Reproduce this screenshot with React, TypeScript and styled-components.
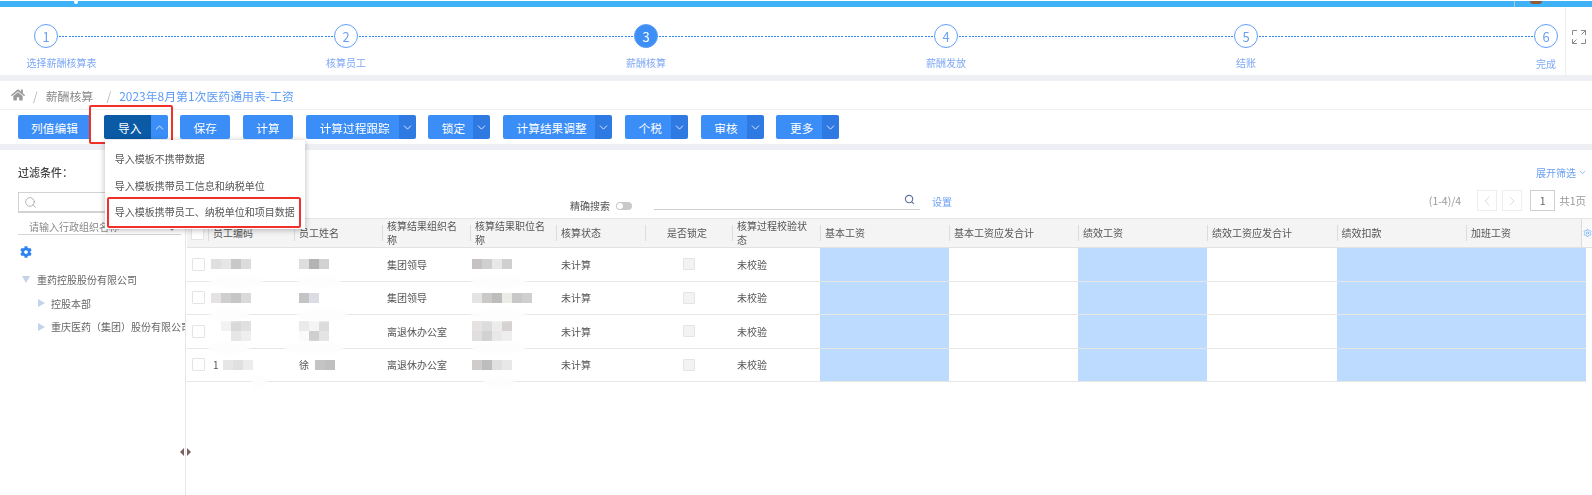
import { Fragment } from "react";
import styled, { createGlobalStyle } from "styled-components";
import { ChevronDown, ChevronLeft, ChevronRight, ChevronUp, Search, Settings } from "lucide-react";
import { FaCog, FaHome } from "react-icons/fa";

const GlobalStyle = createGlobalStyle`
  html, body {
    margin: 0;
    height: 495px;
    overflow: hidden;
    background: #fff;
  }
  body {
    font-family: "Noto Sans CJK SC", "Noto Sans", sans-serif;
    font-size: 10px;
    color: #555;
  }
  * { box-sizing: border-box; }
`;

const Page = styled.div`
  display: flex;
  flex-direction: column;
  height: 495px;
  filter: blur(0.4px);
`;

const TopBar = styled.div`
  display: flex;
  flex: none;
  height: 6px;
  margin-top: 1px;
  padding-left: 74px;
  background: #3fb1f7;
`;
const TopDot = styled.i`
  width: 4px;
  height: 4px;
  margin-top: -1px;
  border-radius: 50%;
  background: #fff;
`;
const TopDivider = styled.i`
  width: 1px;
  margin-left: auto;
  background: #b4c4cf;
`;
const TopAvatar = styled.i`
  width: 12px;
  height: 3px;
  margin: 0 50px 0 15px;
  border-radius: 0 0 6px 6px;
  background: #8d5a3c;
`;

const StepperBar = styled.div`
  display: flex;
  flex: none;
  height: 68px;
`;
const StepTrack = styled.div`
  display: flex;
  flex: 1;
  align-items: flex-start;
  padding: 17px 7px 0 34px;
`;
const Step = styled.div`
  display: flex;
  flex-direction: column;
  align-items: center;
  width: 24px;
`;
const StepCircle = styled.div<{ $active?: boolean }>`
  display: flex;
  flex: none;
  align-items: center;
  justify-content: center;
  width: 24px;
  height: 24px;
  border: 1px solid #5f9df7;
  border-radius: 50%;
  background: ${(p) => (p.$active ? "#3d8ff6" : "#fff")};
  color: ${(p) => (p.$active ? "#fff" : "#6ba0f6")};
  font-size: 13px;
`;
const StepLabel = styled.div<{ $shift?: number; $drop?: number }>`
  margin-top: ${(p) => 8 + (p.$drop ?? 0)}px;
  margin-left: ${(p) => p.$shift ?? 0}px;
  color: #7fa8f5;
  font-size: 10px;
  line-height: 14px;
  white-space: nowrap;
`;
const StepLine = styled.div`
  flex: 1;
  height: 1px;
  margin: 12px 1px 0;
  background: repeating-linear-gradient(90deg, #2f86f5 0 2px, transparent 2px 3.2px);
`;
const ExpandCell = styled.div`
  display: flex;
  flex: none;
  align-items: flex-start;
  justify-content: center;
  width: 27px;
  padding-top: 23px;
  border-left: 1px solid #eeeeee;
`;

const Band = styled.div`
  flex: none;
  height: 6px;
  background: #eeeff4;
`;

const Breadcrumb = styled.div`
  display: flex;
  flex: none;
  align-items: center;
  height: 29px;
  padding-left: 11px;
  border-bottom: 1px solid #f1f1f1;
  color: #888;
  font-size: 11.9px;
`;
const Slash = styled.span`
  margin: 0 8px 0 8px;
  color: #b5b5b5;
`;
const CrumbCurrent = styled.span`
  color: #5e9bf5;
`;

const Toolbar = styled.div`
  position: relative;
  z-index: 5;
  display: flex;
  flex: none;
  gap: 12.7px;
  height: 34px;
  padding: 5px 0 0 18px;
`;
const ButtonGroup = styled.div<{ $width: number }>`
  position: relative;
  display: flex;
  flex: none;
  width: ${(p) => p.$width}px;
  height: 24px;
`;
const ButtonMain = styled.button<{ $dark?: boolean }>`
  flex: 1;
  padding: 0 0 0 5px;
  border: 0;
  border-radius: 2px 0 0 2px;
  background: ${(p) => (p.$dark ? "#0a5aa6" : "#3b8df7")};
  color: #fff;
  font-family: inherit;
  font-size: 11.7px;
  &:only-child {
    padding: 0;
    border-radius: 2px;
  }
`;
const ButtonArrow = styled.button<{ $open?: boolean }>`
  display: flex;
  flex: none;
  align-items: center;
  justify-content: center;
  width: 17px;
  padding: 0;
  border: 0;
  border-radius: 0 2px 2px 0;
  background: ${(p) => (p.$open ? "#3b8df7" : "#2f7ae2")};
  color: #fff;
`;
const RedFrame = styled.div`
  position: absolute;
  inset: -10px -5px -5px -15px;
  border: 2px solid #f2302a;
  border-radius: 2px;
  pointer-events: none;
`;
const Menu = styled.div`
  position: absolute;
  top: 25px;
  left: 1px;
  width: 200px;
  height: 89px;
  padding-top: 6px;
  background: #fff;
  box-shadow: 0 1px 6px rgba(0, 0, 0, 0.28);
`;
const MenuItem = styled.div<{ $marked?: boolean }>`
  position: relative;
  height: 26.5px;
  padding-left: 10px;
  color: #555;
  font-size: 10px;
  line-height: 26.5px;
  white-space: nowrap;
  ${(p) =>
    p.$marked &&
    `&::after {
      content: "";
      position: absolute;
      inset: -2px 4px -2px 2px;
      border: 2px solid #f2302a;
      border-radius: 2px;
    }`}
`;

const Main = styled.div`
  display: flex;
  flex: 1;
  min-height: 0;
`;

const Sidebar = styled.aside`
  position: relative;
  flex: none;
  width: 186px;
  padding: 14px 1px 0 18px;
`;
const SidebarRule = styled.i`
  position: absolute;
  top: 68px;
  right: 0;
  bottom: 0;
  width: 1px;
  background: #e6e6e6;
`;
const Handle = styled.div`
  position: absolute;
  top: 298px;
  right: -5px;
  display: flex;
  gap: 3px;
  align-items: center;
`;
const HandleArrow = styled.i<{ $left?: boolean }>`
  width: 0;
  height: 0;
  border-top: 4px solid transparent;
  border-bottom: 4px solid transparent;
  ${(p) => (p.$left ? "border-right: 4px solid #7d6060;" : "border-left: 4px solid #7d6060;")}
`;
const FilterTitle = styled.div`
  color: #444;
  font-size: 11px;
  font-weight: 500;
  line-height: 16px;
`;
const SearchBox = styled.div`
  display: flex;
  align-items: center;
  height: 21px;
  margin: 12px 4px 0 0;
  padding-left: 5px;
  border: 1px solid #d2d2d2;
  border-bottom-width: 2px;
  border-right: 0;
  color: #999;
`;
const OrgSelect = styled.div`
  display: flex;
  align-items: center;
  justify-content: space-between;
  height: 22px;
  margin-right: 4px;
  padding: 6px 6px 0 11px;
  border-bottom: 1px solid #d5d5d5;
  color: #888;
  font-size: 10px;
`;
const Caret = styled.i`
  width: 0;
  height: 0;
  margin-top: 6px;
  border-top: 3px solid #999;
  border-right: 3px solid transparent;
  border-left: 3px solid transparent;
`;
const TreeGear = styled.div`
  display: flex;
  height: 12px;
  margin: 11px 0 10px 2px;
  color: #2f83ee;
`;
const TreeRow = styled.div<{ $depth: number }>`
  display: flex;
  align-items: center;
  gap: ${(p) => (p.$depth === 0 ? 7 : 6)}px;
  height: 23.5px;
  padding-left: ${(p) => (p.$depth === 0 ? 4 : 20)}px;
  overflow: hidden;
  color: #666;
  font-size: 10px;
  white-space: nowrap;
`;
const TreeArrow = styled.i<{ $open?: boolean }>`
  flex: none;
  width: 0;
  height: 0;
  ${(p) =>
    p.$open
      ? "border-top: 7px solid #c3d3ea; border-left: 4.5px solid transparent; border-right: 4.5px solid transparent;"
      : "border-left: 7px solid #c3d3ea; border-top: 4.5px solid transparent; border-bottom: 4.5px solid transparent;"}
`;

const Content = styled.section`
  flex: 1;
  min-width: 0;
  padding: 14px 0 0 1px;
`;
const FilterLinkRow = styled.div`
  display: flex;
  justify-content: flex-end;
  align-items: center;
  gap: 2px;
  height: 16px;
  padding-right: 5px;
  color: #6a9ff5;
  font-size: 10px;
`;
const SearchRow = styled.div`
  display: flex;
  align-items: flex-start;
  height: 28px;
  margin-top: 10px;
  padding-left: 383px;
`;
const ExactLabel = styled.span`
  margin-top: 9px;
  line-height: 14px;
`;
const Toggle = styled.i`
  position: relative;
  width: 16px;
  height: 8px;
  margin: 12px 0 0 6px;
  border-radius: 4px;
  background: #c9c9c9;
  &::after {
    content: "";
    position: absolute;
    top: 1px;
    left: 1px;
    width: 6px;
    height: 6px;
    border-radius: 50%;
    background: #fff;
  }
`;
const KeywordField = styled.div`
  display: flex;
  justify-content: flex-end;
  width: 266px;
  height: 20px;
  margin-left: 22px;
  padding: 4px 5px 0 0;
  border-bottom: 1px solid #cfcfcf;
  color: #5b6f9a;
`;
const SetLink = styled.a`
  margin: 5px 0 0 12px;
  color: #6a9ff5;
  line-height: 14px;
`;
const Pager = styled.div`
  display: flex;
  align-items: center;
  height: 21px;
  margin-left: auto;
  padding-right: 6px;
  color: #999;
  font-size: 10.5px;
`;
const PagerCount = styled.span`
  margin-right: 16px;
`;
const PagerButton = styled.div`
  display: flex;
  align-items: center;
  justify-content: center;
  width: 20px;
  height: 21px;
  margin-right: 5px;
  border: 1px solid #eee;
  color: #ccc;
`;
const PagerInput = styled.div`
  display: flex;
  align-items: center;
  justify-content: center;
  width: 25px;
  height: 21px;
  margin: 0 4px 0 3px;
  border: 1px solid #d0d0d0;
  color: #666;
`;

const TableWrap = styled.div`
  position: relative;
  width: 1405px;
`;
const HeadRow = styled.div`
  display: grid;
  grid-template-columns: 21px 86px 88px 88px 86px 89px 87px 88px 129px 129px 129px 129.5px 129.5px 115px 11px;
  height: 30px;
  border-top: 1px solid #e6e6e6;
  border-bottom: 1px solid #e2e2e2;
`;
const HeadCell = styled.div<{ $center?: boolean }>`
  position: relative;
  display: flex;
  align-items: center;
  justify-content: ${(p) => (p.$center ? "center" : "flex-start")};
  padding: 0 8px 0 5px;
  background: #f4f4f4;
  color: #555;
  line-height: 14px;
  &::before {
    content: "";
    position: absolute;
    top: 6px;
    bottom: 6px;
    left: 0;
    width: 1px;
    background: #dcdcdc;
  }
`;
const CheckHead = styled.div`
  display: flex;
  align-items: center;
  padding-left: 4px;
  background: #f4f4f4;
`;
const GearCell = styled.div`
  display: flex;
  align-items: center;
  padding-left: 1px;
  overflow: hidden;
  border-left: 1px solid #dcdcdc;
  background: #f9f9f9;
  color: #6fadf3;
`;
const BodyRow = styled.div`
  display: grid;
  grid-template-columns: 21px 86px 88px 88px 86px 89px 87px 88px 129px 129px 129px 129.5px 129.5px 120px;
  width: 1399px;
  height: 33.5px;
  border-bottom: 1px solid #e6e6e6;
`;
const Cell = styled.div<{ $fill?: boolean; $center?: boolean }>`
  display: flex;
  align-items: center;
  justify-content: ${(p) => (p.$center ? "center" : "flex-start")};
  padding-left: ${(p) => (p.$center ? 0 : 5)}px;
  background: ${(p) => (p.$fill ? "#bddaff" : "transparent")};
  color: #555;
  white-space: nowrap;
`;
const CheckCell = styled.div`
  display: flex;
  align-items: center;
  padding-left: 5px;
`;
const Check = styled.i<{ $off?: boolean }>`
  display: block;
  flex: none;
  width: ${(p) => (p.$off ? 12 : 13)}px;
  height: ${(p) => (p.$off ? 12 : 13)}px;
  border: 1px solid #e4e4e4;
  border-radius: 1px;
  background: ${(p) => (p.$off ? "#f3f3f3" : "#fff")};
`;
const Mosaic = styled.div<{ $cols: number; $indent: number }>`
  display: grid;
  flex: none;
  grid-template-columns: repeat(${(p) => p.$cols}, 10px);
  grid-auto-rows: 10px;
  margin-left: ${(p) => p.$indent}px;
`;
const Tile = styled.i<{ $tone: string }>`
  background: ${(p) => p.$tone};
`;
const SmudgeLayer = styled.svg`
  position: absolute;
  top: 30px;
  left: 0;
  width: 400px;
  height: 175px;
  filter: blur(1.5px);
  pointer-events: none;
`;

const steps = [
  { n: 1, label: "选择薪酬核算表", shift: 31 },
  { n: 2, label: "核算员工" },
  { n: 3, label: "薪酬核算", active: true },
  { n: 4, label: "薪酬发放" },
  { n: 5, label: "结账" },
  { n: 6, label: "完成", drop: 1 },
];

const actions = [
  { label: "列值编辑", width: 73 },
  { label: "保存", width: 50 },
  { label: "计算", width: 50 },
  { label: "计算过程跟踪", width: 110, arrow: true },
  { label: "锁定", width: 62, arrow: true },
  { label: "计算结果调整", width: 109, arrow: true },
  { label: "个税", width: 63, arrow: true },
  { label: "审核", width: 63, arrow: true },
  { label: "更多", width: 63, arrow: true },
];

const columns = [
  "员工编码",
  "员工姓名",
  "核算结果组织名称",
  "核算结果职位名称",
  "核算状态",
  "是否锁定",
  "核算过程校验状态",
  "基本工资",
  "基本工资应发合计",
  "绩效工资",
  "绩效工资应发合计",
  "绩效扣款",
  "加班工资",
];

type Patch = { cols: number; tones: string[]; lead?: string; indent?: number };

const rows: { code: Patch; name: Patch; org: string; post: Patch }[] = [
  {
    code: { cols: 4, indent: -2, tones: ["#e0dede", "#e6e6e6", "#c9c8c8", "#dcdcdc"] },
    name: { cols: 3, indent: 0, tones: ["#dedede", "#b4b4b4", "#d2d2d2"] },
    org: "集团领导",
    post: { cols: 4, indent: -3, tones: ["#c6c2c2", "#cfcfcf", "#e8e8e8", "#cfcfcf"] },
  },
  {
    code: { cols: 4, indent: -2, tones: ["#e4e2e2", "#d0cfcf", "#c6c6c6", "#dadada"] },
    name: { cols: 2, indent: 0, tones: ["#c4c4c4", "#dcdce4"] },
    org: "集团领导",
    post: { cols: 6, indent: -3, tones: ["#e4e4e4", "#cbc8c8", "#bdbdbd", "#ecece6", "#c8c8c8", "#cfcfcf"] },
  },
  {
    code: { cols: 4, indent: -2, tones: ["#fff", "#f2f2f2", "#d9d9d9", "#e0e0e0", "#fff", "#fff", "#e6e6e6", "#eeeeee"] },
    name: { cols: 3, indent: 0, tones: ["#eaeaea", "#f4f4f4", "#dcdcdc", "#fafafa", "#cfcfcf", "#e4e4e4"] },
    org: "离退休办公室",
    post: { cols: 4, indent: -3, tones: ["#e6e2e2", "#dcdcdc", "#ececec", "#d6d2d2", "#e0dede", "#d2d2d2", "#e8e8e8", "#eeeeee"] },
  },
  {
    code: { cols: 3, lead: "1", indent: 4, tones: ["#e6e6e6", "#e0e0e0", "#ececec"] },
    name: { cols: 2, lead: "徐", indent: 6, tones: ["#c4c4c4", "#c0c0c0"] },
    org: "离退休办公室",
    post: { cols: 4, indent: -3, tones: ["#d0cccc", "#bdbdbd", "#e0e0e0", "#e8e8e8"] },
  },
];

// white smudges left over the row rules by the redaction
const smudges = [
  [49, 34, 27], [42, 67, 20], [42, 100, 21], [72, 134, 8],
  [132, 34, 22], [135, 67, 26], [127, 100, 30],
  [312, 34, 28], [312, 67, 28], [312, 100, 27], [312, 134, 16],
];

function Patchwork({ patch }: { patch: Patch }) {
  return (
    <>
      {patch.lead}
      <Mosaic $cols={patch.cols} $indent={patch.indent ?? 0}>
        {patch.tones.map((tone, i) => (
          <Tile key={i} $tone={tone} />
        ))}
      </Mosaic>
    </>
  );
}

function ExpandIcon() {
  return (
    <svg width="14" height="14" viewBox="0 0 14 14" fill="none" stroke="#8a8a8a" strokeWidth="1">
      <path d="M.5 5V.5H5M9 .5h4.5V5M13.5.5 9.5 4.5M.5 9v4.5H5M.5 13.5l4-4M13.5 9v4.5H9" />
    </svg>
  );
}

export default function App() {
  return (
    <Page>
      <GlobalStyle />
      <TopBar>
        <TopDot />
        <TopDivider />
        <TopAvatar />
      </TopBar>

      <StepperBar>
        <StepTrack>
          {steps.map((s, i) => (
            <Fragment key={s.n}>
              {i > 0 && <StepLine />}
              <Step>
                <StepCircle $active={s.active}>{s.n}</StepCircle>
                <StepLabel $shift={s.shift} $drop={s.drop}>
                  {s.label}
                </StepLabel>
              </Step>
            </Fragment>
          ))}
        </StepTrack>
        <ExpandCell>
          <ExpandIcon />
        </ExpandCell>
      </StepperBar>
      <Band />

      <Breadcrumb>
        <FaHome size={14} color="#9a9a9a" />
        <Slash>/</Slash>
        <span>薪酬核算</span>
        <Slash>&nbsp;&nbsp;/</Slash>
        <CrumbCurrent>2023年8月第1次医药通用表-工资</CrumbCurrent>
      </Breadcrumb>

      <Toolbar>
        <ButtonGroup $width={actions[0].width}>
          <ButtonMain>{actions[0].label}</ButtonMain>
        </ButtonGroup>
        <ButtonGroup $width={64}>
          <ButtonMain $dark>导入</ButtonMain>
          <ButtonArrow $open>
            <ChevronUp size={13} strokeWidth={1.5} />
          </ButtonArrow>
          <RedFrame />
          <Menu>
            <MenuItem>导入模板不携带数据</MenuItem>
            <MenuItem>导入模板携带员工信息和纳税单位</MenuItem>
            <MenuItem $marked>导入模板携带员工、纳税单位和项目数据</MenuItem>
          </Menu>
        </ButtonGroup>
        {actions.slice(1).map((a) => (
          <ButtonGroup key={a.label} $width={a.width}>
            <ButtonMain>{a.label}</ButtonMain>
            {a.arrow && (
              <ButtonArrow>
                <ChevronDown size={13} strokeWidth={1.5} />
              </ButtonArrow>
            )}
          </ButtonGroup>
        ))}
      </Toolbar>
      <Band />

      <Main>
        <Sidebar>
          <FilterTitle>过滤条件：</FilterTitle>
          <SearchBox>
            <Search size={13} strokeWidth={1.3} />
          </SearchBox>
          <OrgSelect>
            请输入行政组织名称
            <Caret />
          </OrgSelect>
          <TreeGear>
            <FaCog size={12} />
          </TreeGear>
          <TreeRow $depth={0}>
            <TreeArrow $open />
            重药控股股份有限公司
          </TreeRow>
          <TreeRow $depth={1}>
            <TreeArrow />
            控股本部
          </TreeRow>
          <TreeRow $depth={1}>
            <TreeArrow />
            重庆医药（集团）股份有限公司
          </TreeRow>
          <SidebarRule />
          <Handle>
            <HandleArrow $left />
            <HandleArrow />
          </Handle>
        </Sidebar>

        <Content>
          <FilterLinkRow>
            展开筛选
            <ChevronDown size={9} />
          </FilterLinkRow>
          <SearchRow>
            <ExactLabel>精确搜索</ExactLabel>
            <Toggle />
            <KeywordField>
              <Search size={11} strokeWidth={2.4} />
            </KeywordField>
            <SetLink>设置</SetLink>
            <Pager>
              <PagerCount>(1-4)/4</PagerCount>
              <PagerButton>
                <ChevronLeft size={16} strokeWidth={1} />
              </PagerButton>
              <PagerButton>
                <ChevronRight size={16} strokeWidth={1} />
              </PagerButton>
              <PagerInput>1</PagerInput>
              共1页
            </Pager>
          </SearchRow>

          <TableWrap>
            <HeadRow>
              <CheckHead>
                <Check />
              </CheckHead>
              {columns.map((c) => (
                <HeadCell key={c} $center={c === "是否锁定"}>
                  {c}
                </HeadCell>
              ))}
              <GearCell>
                <Settings size={14} strokeWidth={2} />
              </GearCell>
            </HeadRow>
            {rows.map((r, i) => (
              <BodyRow key={i}>
                <CheckCell>
                  <Check />
                </CheckCell>
                <Cell>
                  <Patchwork patch={r.code} />
                </Cell>
                <Cell>
                  <Patchwork patch={r.name} />
                </Cell>
                <Cell>{r.org}</Cell>
                <Cell>
                  <Patchwork patch={r.post} />
                </Cell>
                <Cell>未计算</Cell>
                <Cell $center>
                  <Check $off />
                </Cell>
                <Cell>未校验</Cell>
                <Cell $fill />
                <Cell />
                <Cell $fill />
                <Cell />
                <Cell $fill />
                <Cell $fill />
              </BodyRow>
            ))}
            <SmudgeLayer viewBox="0 0 400 175" fill="#fdfdfd">
              {smudges.map(([cx, cy, rx]) => (
                <ellipse key={`${cx}-${cy}`} cx={cx} cy={cy} rx={rx} ry="6" />
              ))}
            </SmudgeLayer>
          </TableWrap>
        </Content>
      </Main>
    </Page>
  );
}
